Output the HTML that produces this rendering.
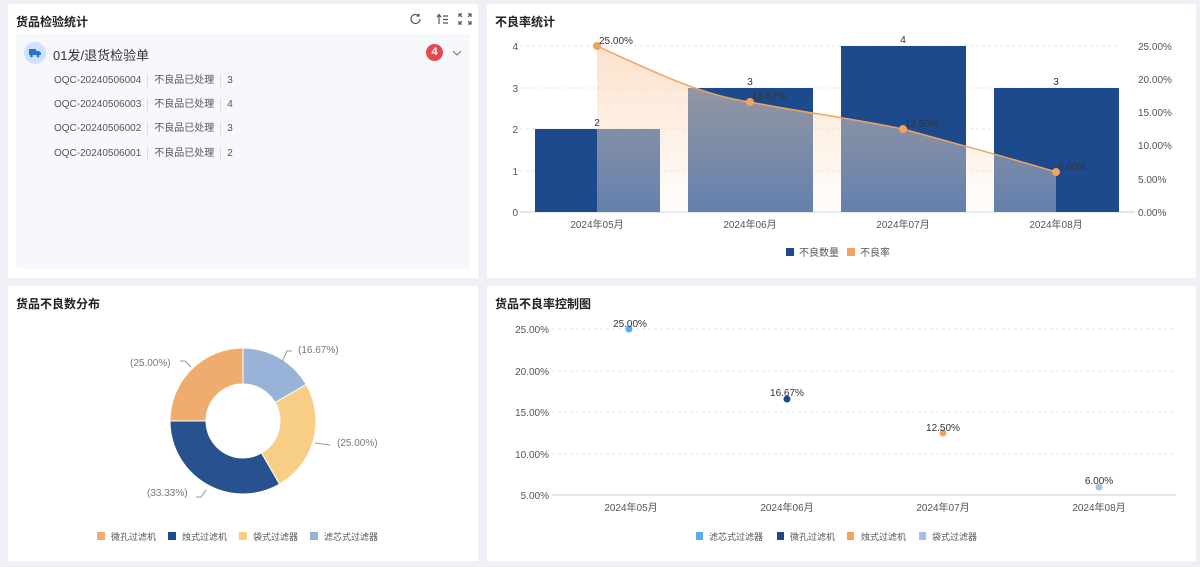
<!DOCTYPE html>
<html><head><meta charset="utf-8"><style>
*{margin:0;padding:0;box-sizing:border-box}
body{width:1200px;height:567px;background:#eef0f6;font-family:"Liberation Sans","Noto Sans CJK SC",sans-serif;position:relative;overflow:hidden}
.p{position:absolute;background:#fff}
.t{position:absolute;left:8px;top:9px;font-size:12px;font-weight:bold;color:#222}
.row{position:absolute;left:38px;font-size:10px;color:#555;display:flex;align-items:center}
.row span{padding:0 6px;border-left:1px solid #ddd;line-height:13px}
.row span:first-child{border:none;padding-left:8px}
svg text{font-family:"Liberation Sans","Noto Sans CJK SC",sans-serif}
</style></head><body>
<div class="p" style="left:8px;top:4px;width:470px;height:274px">
 <div class="t">货品检验统计</div>
 <svg style="position:absolute;left:400px;top:8px" width="65" height="14" fill="none" stroke="#555" stroke-width="1.2">
  <path d="M12 7a4.5 4.5 0 1 1-1.3-3.2M11 1.5v2.5h-2.5"/>
  <path d="M31 3v9M29 5l2-2.5 2 2.5M35 4h5M35 7.5h5M35 11h5"/>
  <path d="M51 5V2h3M60 2h3v3M63 9v3h-3M54 12h-3V9M51 2l3 3M63 2l-3 3M63 12l-3-3M51 12l3-3"/>
 </svg>
 <div style="position:absolute;left:8px;top:30px;width:454px;height:235px;background:#f7f8fc;border-radius:3px">
  <div style="position:absolute;left:8px;top:8px;width:22px;height:22px;border-radius:50%;background:#cfe2fb"></div>
  <svg style="position:absolute;left:13px;top:14px" width="12" height="10"><rect x="0" y="1" width="7" height="6" fill="#2d6fd3"/><path d="M7 3h3l2 2v2H7z" fill="#2d6fd3"/><circle cx="2.5" cy="8" r="1.3" fill="#2d6fd3"/><circle cx="9" cy="8" r="1.3" fill="#2d6fd3"/></svg>
  <div style="position:absolute;left:37px;top:11px;font-size:13px;color:#333">01发/退货检验单</div>
  <div style="position:absolute;left:410px;top:10px;width:17px;height:17px;border-radius:50%;background:#e5484d;color:#fff;font-size:11px;font-weight:bold;text-align:center;line-height:17px">4</div>
  <svg style="position:absolute;left:436px;top:16px" width="10" height="6"><path d="M1 1l4 4 4-4" stroke="#777" fill="none"/></svg>
 </div>
 <div class="row" style="top:70px"><span>OQC-20240506004</span><span>不良品已处理</span><span>3</span></div>
 <div class="row" style="top:94px"><span>OQC-20240506003</span><span>不良品已处理</span><span>4</span></div>
 <div class="row" style="top:118px"><span>OQC-20240506002</span><span>不良品已处理</span><span>3</span></div>
 <div class="row" style="top:143px"><span>OQC-20240506001</span><span>不良品已处理</span><span>2</span></div>
</div>
<div class="p" style="left:487px;top:4px;width:709px;height:274px"><div class="t">不良率统计</div></div>
<div class="p" style="left:8px;top:286px;width:470px;height:275px"><div class="t">货品不良数分布</div></div>
<div class="p" style="left:487px;top:286px;width:709px;height:275px"><div class="t">货品不良率控制图</div></div>

<svg style="position:absolute;left:0;top:0" width="1200" height="567">
 <defs><linearGradient id="g" x1="0" y1="0" x2="0" y2="1"><stop offset="0" stop-color="#f5a25c" stop-opacity=".45"/><stop offset="1" stop-color="#f5a25c" stop-opacity=".02"/></linearGradient></defs>
 <g stroke="#e6e6e6" stroke-dasharray="3,3">
  <line x1="520" y1="46" x2="1120" y2="46"/><line x1="520" y1="88" x2="1120" y2="88"/><line x1="520" y1="129" x2="1120" y2="129"/><line x1="520" y1="171" x2="1120" y2="171"/>
 </g>
 <line x1="520" y1="212" x2="1135" y2="212" stroke="#ccc"/>
 <g fill="#1c4a8c">
  <rect x="535" y="129" width="125" height="83"/><rect x="688" y="88" width="125" height="124"/><rect x="841" y="46" width="125" height="166"/><rect x="994" y="88" width="125" height="124"/>
 </g>
 <path d="M597 46 C650 70 700 95 750 102 C800 112 850 118 903 129 C960 145 1000 155 1056 172 L1056 212 L597 212Z" fill="url(#g)"/>
 <path d="M597 46 C650 70 700 95 750 102 C800 112 850 118 903 129 C960 145 1000 155 1056 172 L1056 212 L597 212Z" fill="#ffffff" opacity=".3"/>
 <path d="M597 46 C650 70 700 95 750 102 C800 112 850 118 903 129 C960 145 1000 155 1056 172" fill="none" stroke="#f2a35e" stroke-width="1.5"/>
 <g fill="#f2a35e"><circle cx="597" cy="46" r="4"/><circle cx="750" cy="102" r="4"/><circle cx="903" cy="129" r="4"/><circle cx="1056" cy="172" r="4"/></g>
 <g font-size="10" fill="#333" text-anchor="middle">
  <text x="597" y="126">2</text><text x="750" y="85">3</text><text x="903" y="43">4</text><text x="1056" y="85">3</text>
 </g>
 <g font-size="10" fill="#333"><text x="599" y="44">25.00%</text><text x="752" y="99">16.67%</text><text x="905" y="127">12.50%</text><text x="1058" y="170">6.00%</text></g>
 <g font-size="10" fill="#555" text-anchor="end"><text x="518" y="50">4</text><text x="518" y="92">3</text><text x="518" y="133">2</text><text x="518" y="175">1</text><text x="518" y="216">0</text></g>
 <g font-size="10" fill="#555"><text x="1138" y="50">25.00%</text><text x="1138" y="83">20.00%</text><text x="1138" y="116">15.00%</text><text x="1138" y="149">10.00%</text><text x="1138" y="183">5.00%</text><text x="1138" y="216">0.00%</text></g>
 <g font-size="10" fill="#555" text-anchor="middle"><text x="597" y="228">2024年05月</text><text x="750" y="228">2024年06月</text><text x="903" y="228">2024年07月</text><text x="1056" y="228">2024年08月</text></g>
 <rect x="786" y="248" width="8" height="8" fill="#1c4a8c"/><text x="799" y="256" font-size="10" fill="#555">不良数量</text>
 <rect x="847" y="248" width="8" height="8" fill="#f2a35e"/><text x="860" y="256" font-size="10" fill="#555">不良率</text>

 <g stroke="#fff" stroke-width="1">
  <path d="M243 348 A73 73 0 0 1 306.2 384.5 L275 402.5 A37 37 0 0 0 243 384Z" fill="#98b2d8"/>
  <path d="M306.2 384.5 A73 73 0 0 1 279.5 484.2 L261.5 453 A37 37 0 0 0 275 402.5Z" fill="#f8cd86"/>
  <path d="M279.5 484.2 A73 73 0 0 1 170 421 L206 421 A37 37 0 0 0 261.5 453Z" fill="#27528f"/>
  <path d="M170 421 A73 73 0 0 1 243 348 L243 384 A37 37 0 0 0 206 421Z" fill="#f0ab6e"/>
 </g>
 <g stroke="#999" fill="none"><path d="M282 362l5-11h5"/><path d="M315 443l15 2"/><path d="M206 490l-5 7h-5"/><path d="M191 367l-6-6h-5"/></g>
 <g font-size="10" fill="#777"><text x="298" y="353">(16.67%)</text><text x="337" y="446">(25.00%)</text><text x="147" y="496">(33.33%)</text><text x="130" y="366">(25.00%)</text></g>
 <g font-size="9" fill="#555">
  <rect x="97" y="532" width="8" height="8" fill="#f0ab6e"/><text x="111" y="540">微孔过滤机</text>
  <rect x="168" y="532" width="8" height="8" fill="#1c4a8c"/><text x="182" y="540">烛式过滤机</text>
  <rect x="239" y="532" width="8" height="8" fill="#f8cd86"/><text x="253" y="540">袋式过滤器</text>
  <rect x="310" y="532" width="8" height="8" fill="#98b2d8"/><text x="324" y="540">滤芯式过滤器</text>
 </g>

 <g stroke="#e6e6e6" stroke-dasharray="3,3">
  <line x1="552" y1="329" x2="1176" y2="329"/><line x1="552" y1="371" x2="1176" y2="371"/><line x1="552" y1="412" x2="1176" y2="412"/><line x1="552" y1="454" x2="1176" y2="454"/>
 </g>
 <line x1="552" y1="495" x2="1176" y2="495" stroke="#ccc"/>
 <g font-size="10" fill="#555" text-anchor="end"><text x="549" y="333">25.00%</text><text x="549" y="375">20.00%</text><text x="549" y="416">15.00%</text><text x="549" y="458">10.00%</text><text x="549" y="499">5.00%</text></g>
 <g font-size="10" fill="#555" text-anchor="middle"><text x="631" y="511">2024年05月</text><text x="787" y="511">2024年06月</text><text x="943" y="511">2024年07月</text><text x="1099" y="511">2024年08月</text></g>
 <circle cx="629" cy="329" r="3.5" fill="#5aaef0"/><circle cx="787" cy="399" r="3.5" fill="#1c4a8c"/><circle cx="943" cy="433" r="3.5" fill="#f2a35e"/><circle cx="1099" cy="487" r="3.5" fill="#a8bfe4"/>
 <g font-size="10" fill="#333" text-anchor="middle"><text x="630" y="327">25.00%</text><text x="787" y="396">16.67%</text><text x="943" y="431">12.50%</text><text x="1099" y="484">6.00%</text></g>
 <g font-size="9" fill="#555">
  <rect x="696" y="532" width="7" height="8" fill="#5aaef0"/><text x="709" y="540">滤芯式过滤器</text>
  <rect x="777" y="532" width="7" height="8" fill="#1c4a8c"/><text x="790" y="540">微孔过滤机</text>
  <rect x="847" y="532" width="7" height="8" fill="#f2a35e"/><text x="861" y="540">烛式过滤机</text>
  <rect x="919" y="532" width="7" height="8" fill="#a8bfe4"/><text x="932" y="540">袋式过滤器</text>
 </g>
</svg>
</body></html>
